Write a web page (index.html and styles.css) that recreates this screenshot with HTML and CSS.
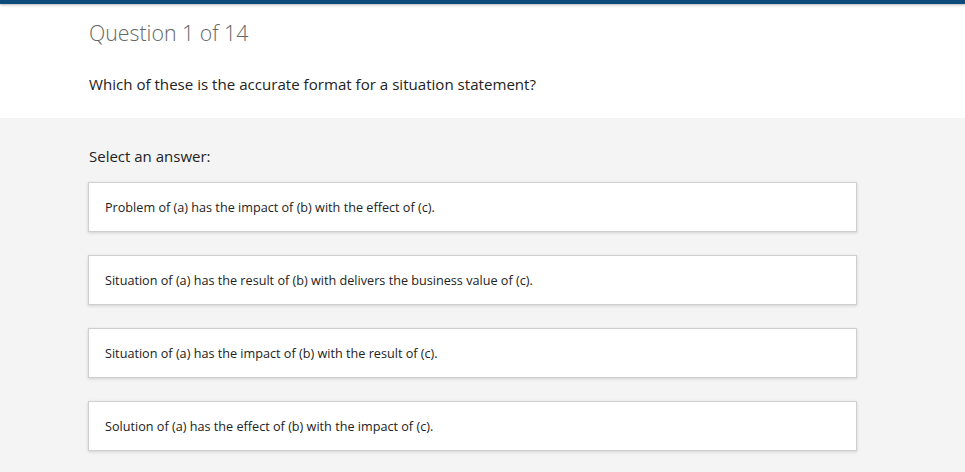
FILE: index.html
```html
<!DOCTYPE html>
<html>
<head>
<meta charset="utf-8">
<link rel="stylesheet" href="styles.css">
</head>
<body>
<div class="topbar"></div>
<header class="head">
  <h1 class="title">Question 1 of 14</h1>
  <p class="question">Which of these is the accurate format for a situation statement?</p>
</header>
<main class="answers">
  <p class="prompt">Select an answer:</p>
  <div class="list">
    <div class="card">Problem of (a) has the impact of (b) with the effect of (c).</div>
    <div class="card">Situation of (a) has the result of (b) with delivers the business value of (c).</div>
    <div class="card">Situation of (a) has the impact of (b) with the result of (c).</div>
    <div class="card">Solution of (a) has the effect of (b) with the impact of (c).</div>
  </div>
</main>
</body>
</html>
```
FILE: styles.css
```css
html, body {
  margin: 0;
  padding: 0;
}
body {
  font-family: "Open Sans", "Noto Sans", sans-serif;
  color: #222;
  background: #f4f4f4;
  height: 472px;
  overflow: hidden;
}
.topbar {
  height: 4px;
  background: #0e4a7c;
  box-shadow: 0 1px 3px rgba(0,0,0,0.3);
  position: relative;
}
.head {
  background: #fff;
  padding: 14px 89px 0;
  box-sizing: border-box;
  height: 114px;
}
.title {
  margin: 0;
  font-weight: 300;
  font-size: 21.3px;
  line-height: 30px;
  color: #666;
}
.question {
  margin: 26px 0 0;
  font-size: 15.1px;
  line-height: 20px;
  color: #222;
}
.answers {
  padding: 27px 88px 0;
}
.prompt {
  margin: 0 0 15px 1px;
  font-size: 15px;
  line-height: 22px;
  color: #222;
}
.list {
  display: flex;
  flex-direction: column;
  gap: 23px;
  width: 769px;
}
.card {
  background: #fff;
  border: 1px solid #cfcfcf;
  box-shadow: 0 1px 3px rgba(0,0,0,0.15);
  height: 50px;
  box-sizing: border-box;
  display: flex;
  align-items: center;
  padding: 0 16px;
  font-size: 12.65px;
  color: #222;
}
```
